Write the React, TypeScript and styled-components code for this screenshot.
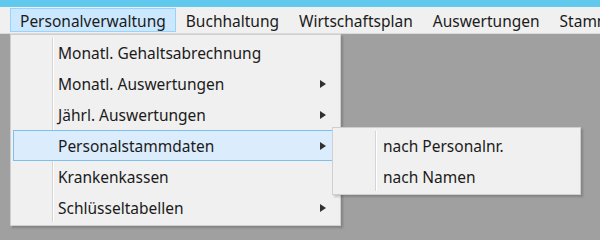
import React from 'react';
import styled, { createGlobalStyle } from 'styled-components';

const GlobalStyle = createGlobalStyle`
    html, body {
        margin: 0;
        padding: 0;
        background: #a0a0a0;
        font-family: "Noto Sans", "Open Sans", sans-serif;
        color: #1b1b1b;
    }
`;

const Window = styled.div`
    width: 600px;
    height: 237px;
    position: relative;
    overflow: hidden;
    background: #a0a0a0;
`;

const TitleStrip = styled.div`
    height: 7px;
    background: #62c9ee;
`;

const MenuBar = styled.div`
    display: flex;
    align-items: stretch;
    height: 27px;
    background: #f0f0f0;
    border-bottom: 1px solid #dadada;
    box-sizing: border-box;
    white-space: nowrap;
    overflow: hidden;
`;

// the previous menu entry, mostly scrolled off to the left
const Clipped = styled.div`
    flex: 0 0 10px;
    display: flex;
    justify-content: flex-end;
    overflow: hidden;
`;

const BarItem = styled.div<{ $open?: boolean }>`
    position: relative;
    flex-shrink: 0;
    display: flex;
    align-items: center;
    padding: 2px 9px 0;
    margin: 1px 0;
    font-size: 15.5px;
    border: 1px solid ${p => (p.$open ? '#99d1ff' : 'transparent')};
    background: ${p => (p.$open ? '#cce8ff' : 'transparent')};
`;

const Dropdown = styled.div<{ $width: number }>`
    position: absolute;
    width: ${p => p.$width}px;
    box-sizing: border-box;
    padding: 2px;
    background: #f0f0f0;
    border: 1px solid #cfcfcf;
    box-shadow: 2px 2px 2px rgba(0, 0, 0, 0.18);
    z-index: 10;
    &::before {
        content: "";
        position: absolute;
        left: 41px;
        top: 3px;
        bottom: 3px;
        width: 1px;
        background: #d5d5d5;
        box-shadow: 1px 0 0 #ffffff;
    }
`;

const MainMenu = styled(Dropdown)`
    left: 10px;
    top: 34px;
`;

const SubMenu = styled(Dropdown)`
    left: calc(100% - 5px);
    top: -4px;
    &::before {
        left: 42px;
    }
`;

const Item = styled.div<{ $active?: boolean; $indent: number }>`
    position: relative;
    display: flex;
    align-items: center;
    height: 31px;
    box-sizing: border-box;
    padding-left: ${p => p.$indent}px;
    font-size: 15.5px;
    white-space: nowrap;
    border: 1px solid ${p => (p.$active ? '#7cc0ee' : 'transparent')};
    background: ${p => (p.$active ? '#dbecfd' : 'transparent')};
`;

const Arrow = styled.span`
    margin-left: auto;
    margin-right: 11px;
    width: 0;
    height: 0;
    border-left: 6px solid #303030;
    border-top: 4.5px solid transparent;
    border-bottom: 4.5px solid transparent;
`;

const menuBar = ['Buchhaltung', 'Wirtschaftsplan', 'Auswertungen', 'Stammdaten', 'Hilfe'];

const entries = [
    { label: 'Monatl. Gehaltsabrechnung' },
    { label: 'Monatl. Auswertungen', sub: true },
    { label: 'Jährl. Auswertungen', sub: true },
    { label: 'Personalstammdaten', sub: true, active: true },
    { label: 'Krankenkassen' },
    { label: 'Schlüsseltabellen', sub: true },
];

const App: React.FC = (): JSX.Element => {
    return (
        <Window>
            <GlobalStyle />
            <TitleStrip />
            <MenuBar>
                <Clipped><BarItem>Datei</BarItem></Clipped>
                <BarItem $open>
                    Personalverwaltung
                </BarItem>
                {menuBar.map(m => <BarItem key={m}>{m}</BarItem>)}
            </MenuBar>
            <MainMenu $width={331}>
                {entries.map(e => (
                    <Item key={e.label} $active={e.active} $indent={44}>
                        {e.label}
                        {e.sub && <Arrow />}
                        {e.active && (
                            <SubMenu $width={249}>
                                <Item $indent={47}>nach Personalnr.</Item>
                                <Item $indent={47}>nach Namen</Item>
                            </SubMenu>
                        )}
                    </Item>
                ))}
            </MainMenu>
        </Window>
    );
};

export default App;
